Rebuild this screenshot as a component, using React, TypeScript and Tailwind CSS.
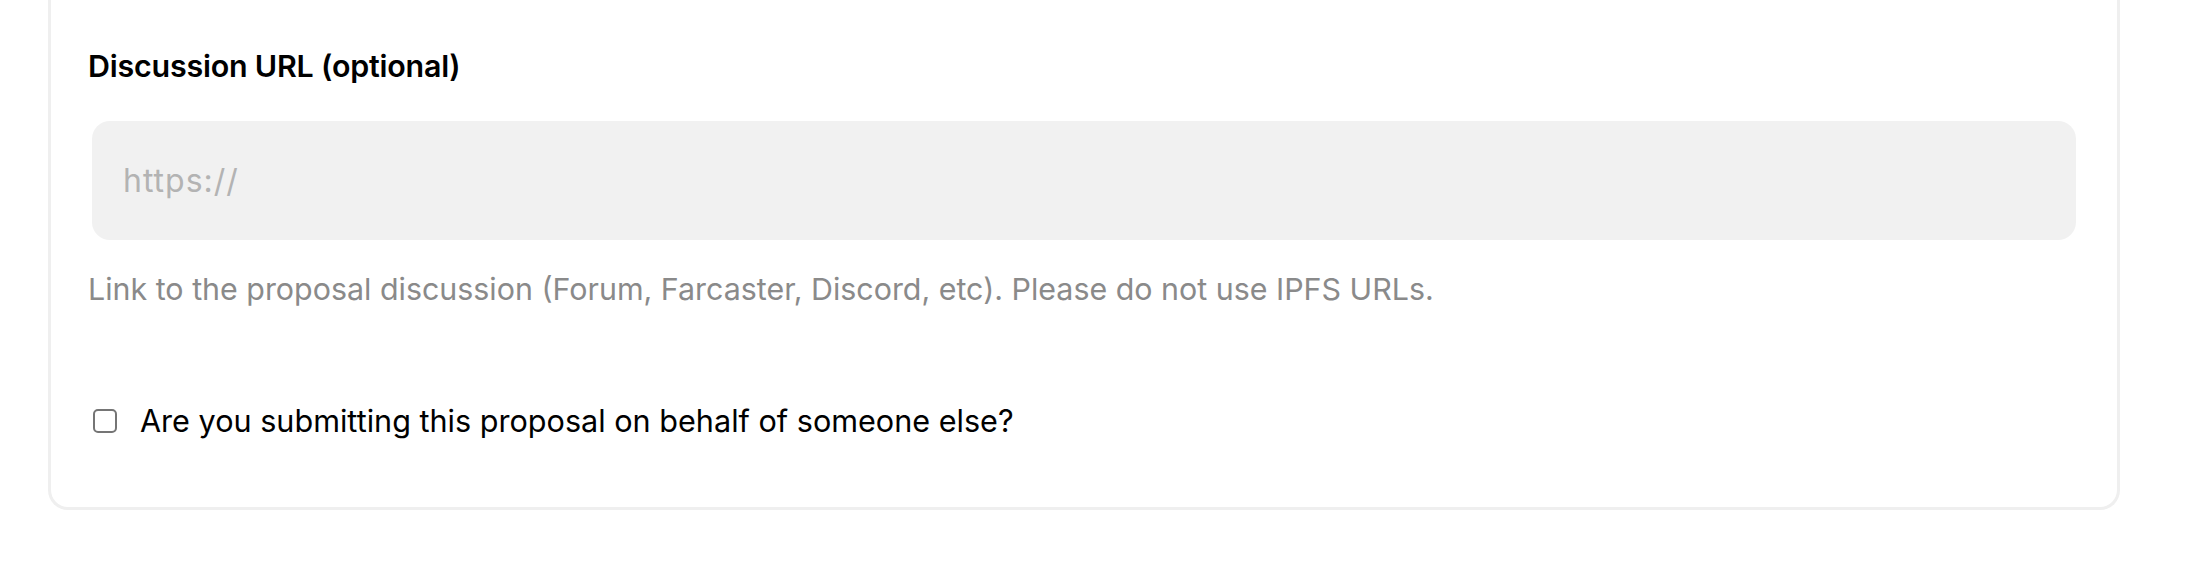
import React from "react";

export default function App() {
  return (
    <div
      className="min-h-[584px] w-[2200px] bg-white pl-[48px] pr-[80px]"
      style={{ fontFamily: "Inter, 'Noto Sans', sans-serif" }}
    >
      <div className="rounded-b-[20px] border-x-[3px] border-b-[3px] border-[#efefef] bg-white px-[37px] pt-[48px] pb-[68px]">
        <label className="block text-[30.4px] font-semibold leading-[36px] text-black tracking-[-0.2px]">
          Discussion URL (optional)
        </label>
        <div className="mt-[37px] ml-[4px] mr-[4px] flex h-[119px] items-center rounded-[18px] bg-[#f1f1f1] px-[31px]">
          <input
            type="text"
            placeholder="https://"
            className="w-full bg-transparent text-[32px] text-black outline-none placeholder:text-[#b3b3b3] tracking-[1px]"
          />
        </div>
        <p className="mt-[31px] text-[30.4px] leading-[36px] text-[#8a8a8a]">
          Link to the proposal discussion (Forum, Farcaster, Discord, etc). Please do not use IPFS URLs.
        </p>
        <label className="mt-[96px] flex items-center gap-[23px]">
          <span className="ml-[5px] block h-[24px] w-[24px] rounded-[5px] border-[2px] border-[#757575] bg-white" />
          <span className="text-[30.6px] leading-[36px] text-black">
            Are you submitting this proposal on behalf of someone else?
          </span>
        </label>
      </div>
    </div>
  );
}
